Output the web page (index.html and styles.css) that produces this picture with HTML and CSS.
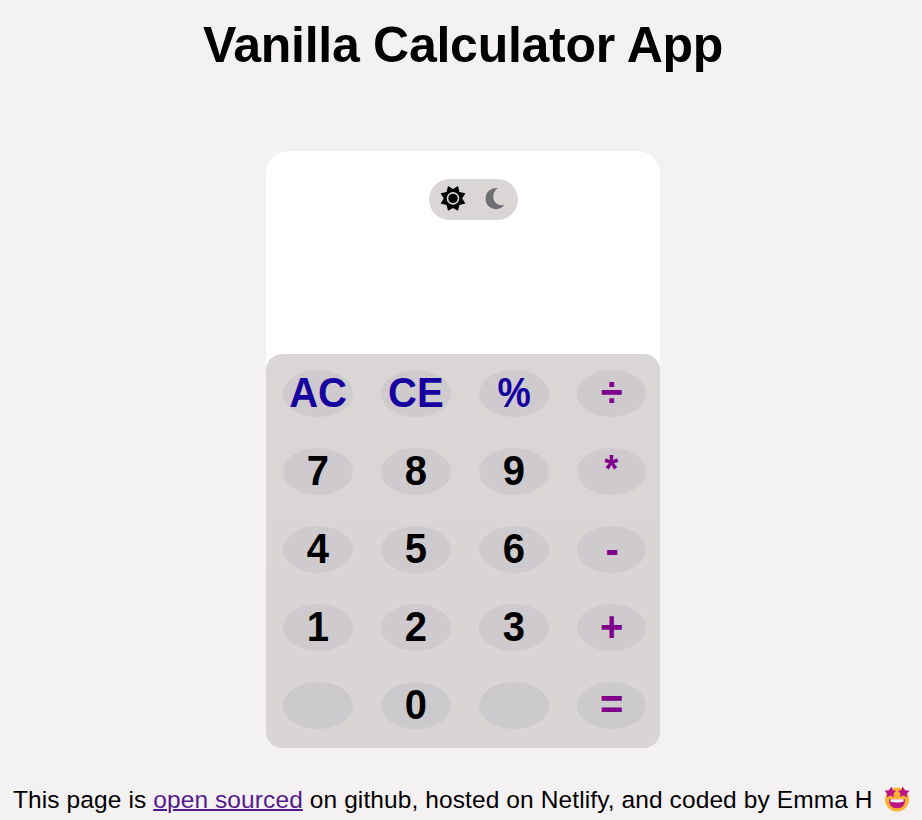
FILE: index.html
```
<!DOCTYPE html>
<html lang="en">
<head>
<meta charset="utf-8">
<title>Vanilla Calculator App</title>
<link rel="stylesheet" href="styles.css">
</head>
<body>
<h1>Vanilla Calculator App</h1>
<main class="calculator">
  <div class="display">
    <div class="theme-toggle">
      <svg class="sun" width="28" height="28" viewBox="0 0 28 28">
        <path d="M9 2 14 5 19 2 20.4 8 26.4 9.2 23.2 14.5 26.4 19.6 20.4 21 19 26.8 14 24 9 26.8 7.6 21 1.6 19.6 4.8 14.5 1.6 9.2 7.6 8Z" fill="#000"/>
        <circle cx="14" cy="14.4" r="5.5" fill="#000" stroke="#dad6d5" stroke-width="1.6"/>
      </svg>
      <svg class="moon" width="20" height="23" viewBox="0 0 20 23">
        <path d="M13 1C7.8 4.2 7.2 10.8 9.8 14.8C12.2 18.2 16 18.9 19.4 17.8C16.6 21.4 13.5 22.3 10.4 22.2C4.4 21.7.6 17 .6 11.5C.6 5 5.5.5 13 1Z" fill="#6e6e72"/>
      </svg>
    </div>
  </div>
  <div class="keys">
    <button class="clear"><span>AC</span></button><button class="clear"><span>CE</span></button><button class="clear"><span class="percent">%</span></button><button class="op"><span>÷</span></button>
    <button><span>7</span></button><button><span>8</span></button><button><span>9</span></button><button class="op"><span class="times">*</span></button>
    <button><span>4</span></button><button><span>5</span></button><button><span>6</span></button><button class="op"><span class="minus">-</span></button>
    <button><span>1</span></button><button><span>2</span></button><button><span>3</span></button><button class="op"><span>+</span></button>
    <button class="last"></button><button class="last"><span>0</span></button><button class="last"></button><button class="op last"><span>=</span></button>
  </div>
</main>
<footer>
  <span>This page is <a href="#">open sourced</a> on github, hosted on Netlify, and coded by Emma H</span>
  <svg class="face" width="26" height="26" viewBox="0 0 26 26">
    <circle cx="13" cy="13.5" r="12" fill="#fcb034"/>
    <path d="M7.5.5 8.8 4.2 12 4.8 9.6 7.6 9.8 11 6.6 9.6 2.8 11.2 3.2 7.8.4 4.8 4.8 4.2ZM18.5.5 21.2 4.2 25.6 4.8 22.8 7.8 23.2 11.2 19.4 9.6 16.2 11 16.4 7.6 14 4.8 17.2 4.2Z" fill="#bc1684"/>
    <path d="M5 13.2H21Q21.4 22.2 13 22.2Q4.6 22.2 5 13.2Z" fill="#bc1684"/>
    <path d="M6.5 13.2H19.5V15.8Q13 17.2 6.5 15.8Z" fill="#fff"/>
  </svg>
</footer>
</body>
</html>
```
FILE: styles.css
```
* { box-sizing: border-box; }
body {
  margin: 0;
  height: 820px;
  overflow: hidden;
  background: #f4f1f3;
  color: #000;
  font-family: "Liberation Sans", Arial, sans-serif;
}
h1 {
  margin: 16px 0 0 4px;
  font-size: 50px;
  line-height: 58px;
  letter-spacing: -0.27px;
  text-align: center;
}
.calculator {
  width: 394px;
  height: 597px;
  margin: 77px 0 0 266px;
  background: linear-gradient(#fff 300px, transparent 300px);
  border-radius: 23px 23px 16px 16px;
}
.display {
  height: 203px;
  padding: 28px 0 0 163px;
}
.theme-toggle {
  display: flex;
  align-items: flex-start;
  width: 89px;
  height: 41px;
  padding: 5px 0 0 10px;
  border-radius: 21px;
  background: #dad6d5;
}
.moon { margin: 3px 0 0 18px; }
.keys {
  display: grid;
  grid-template-columns: repeat(4, 70px);
  grid-auto-rows: 47px;
  gap: 31px 28px;
  height: 394px;
  padding: 16px 0 0 17px;
  border-radius: 16px;
  background: linear-gradient(#dad6d5, #d9d5d4);
}
button {
  display: flex;
  align-items: center;
  justify-content: center;
  padding: 0;
  border: 0;
  border-radius: 50%;
  background: #cfcace;
  color: #000;
  font: bold 43px/45px "Liberation Sans", Arial, sans-serif;
}
button span {
  display: block;
  margin-bottom: 2px;
  transform: scaleX(.93);
}
.clear { color: #1600a0; }
.clear .percent { transform: scaleX(.87); }
.op .times { font-size: 38px; margin-bottom: 5px; }
.op .minus { margin: 0 0 0 2px; }
.op { width: 69px; color: #80008c; }
.last { background: #cccacd; }
footer {
  display: flex;
  margin: 38px 0 0 13px;
  font-size: 24.5px;
  line-height: 28px;
  letter-spacing: 0.1px;
  white-space: nowrap;
}
footer a { color: #551a8b; text-decoration-thickness: 2px; }
.face { margin-left: 11px; }
```
